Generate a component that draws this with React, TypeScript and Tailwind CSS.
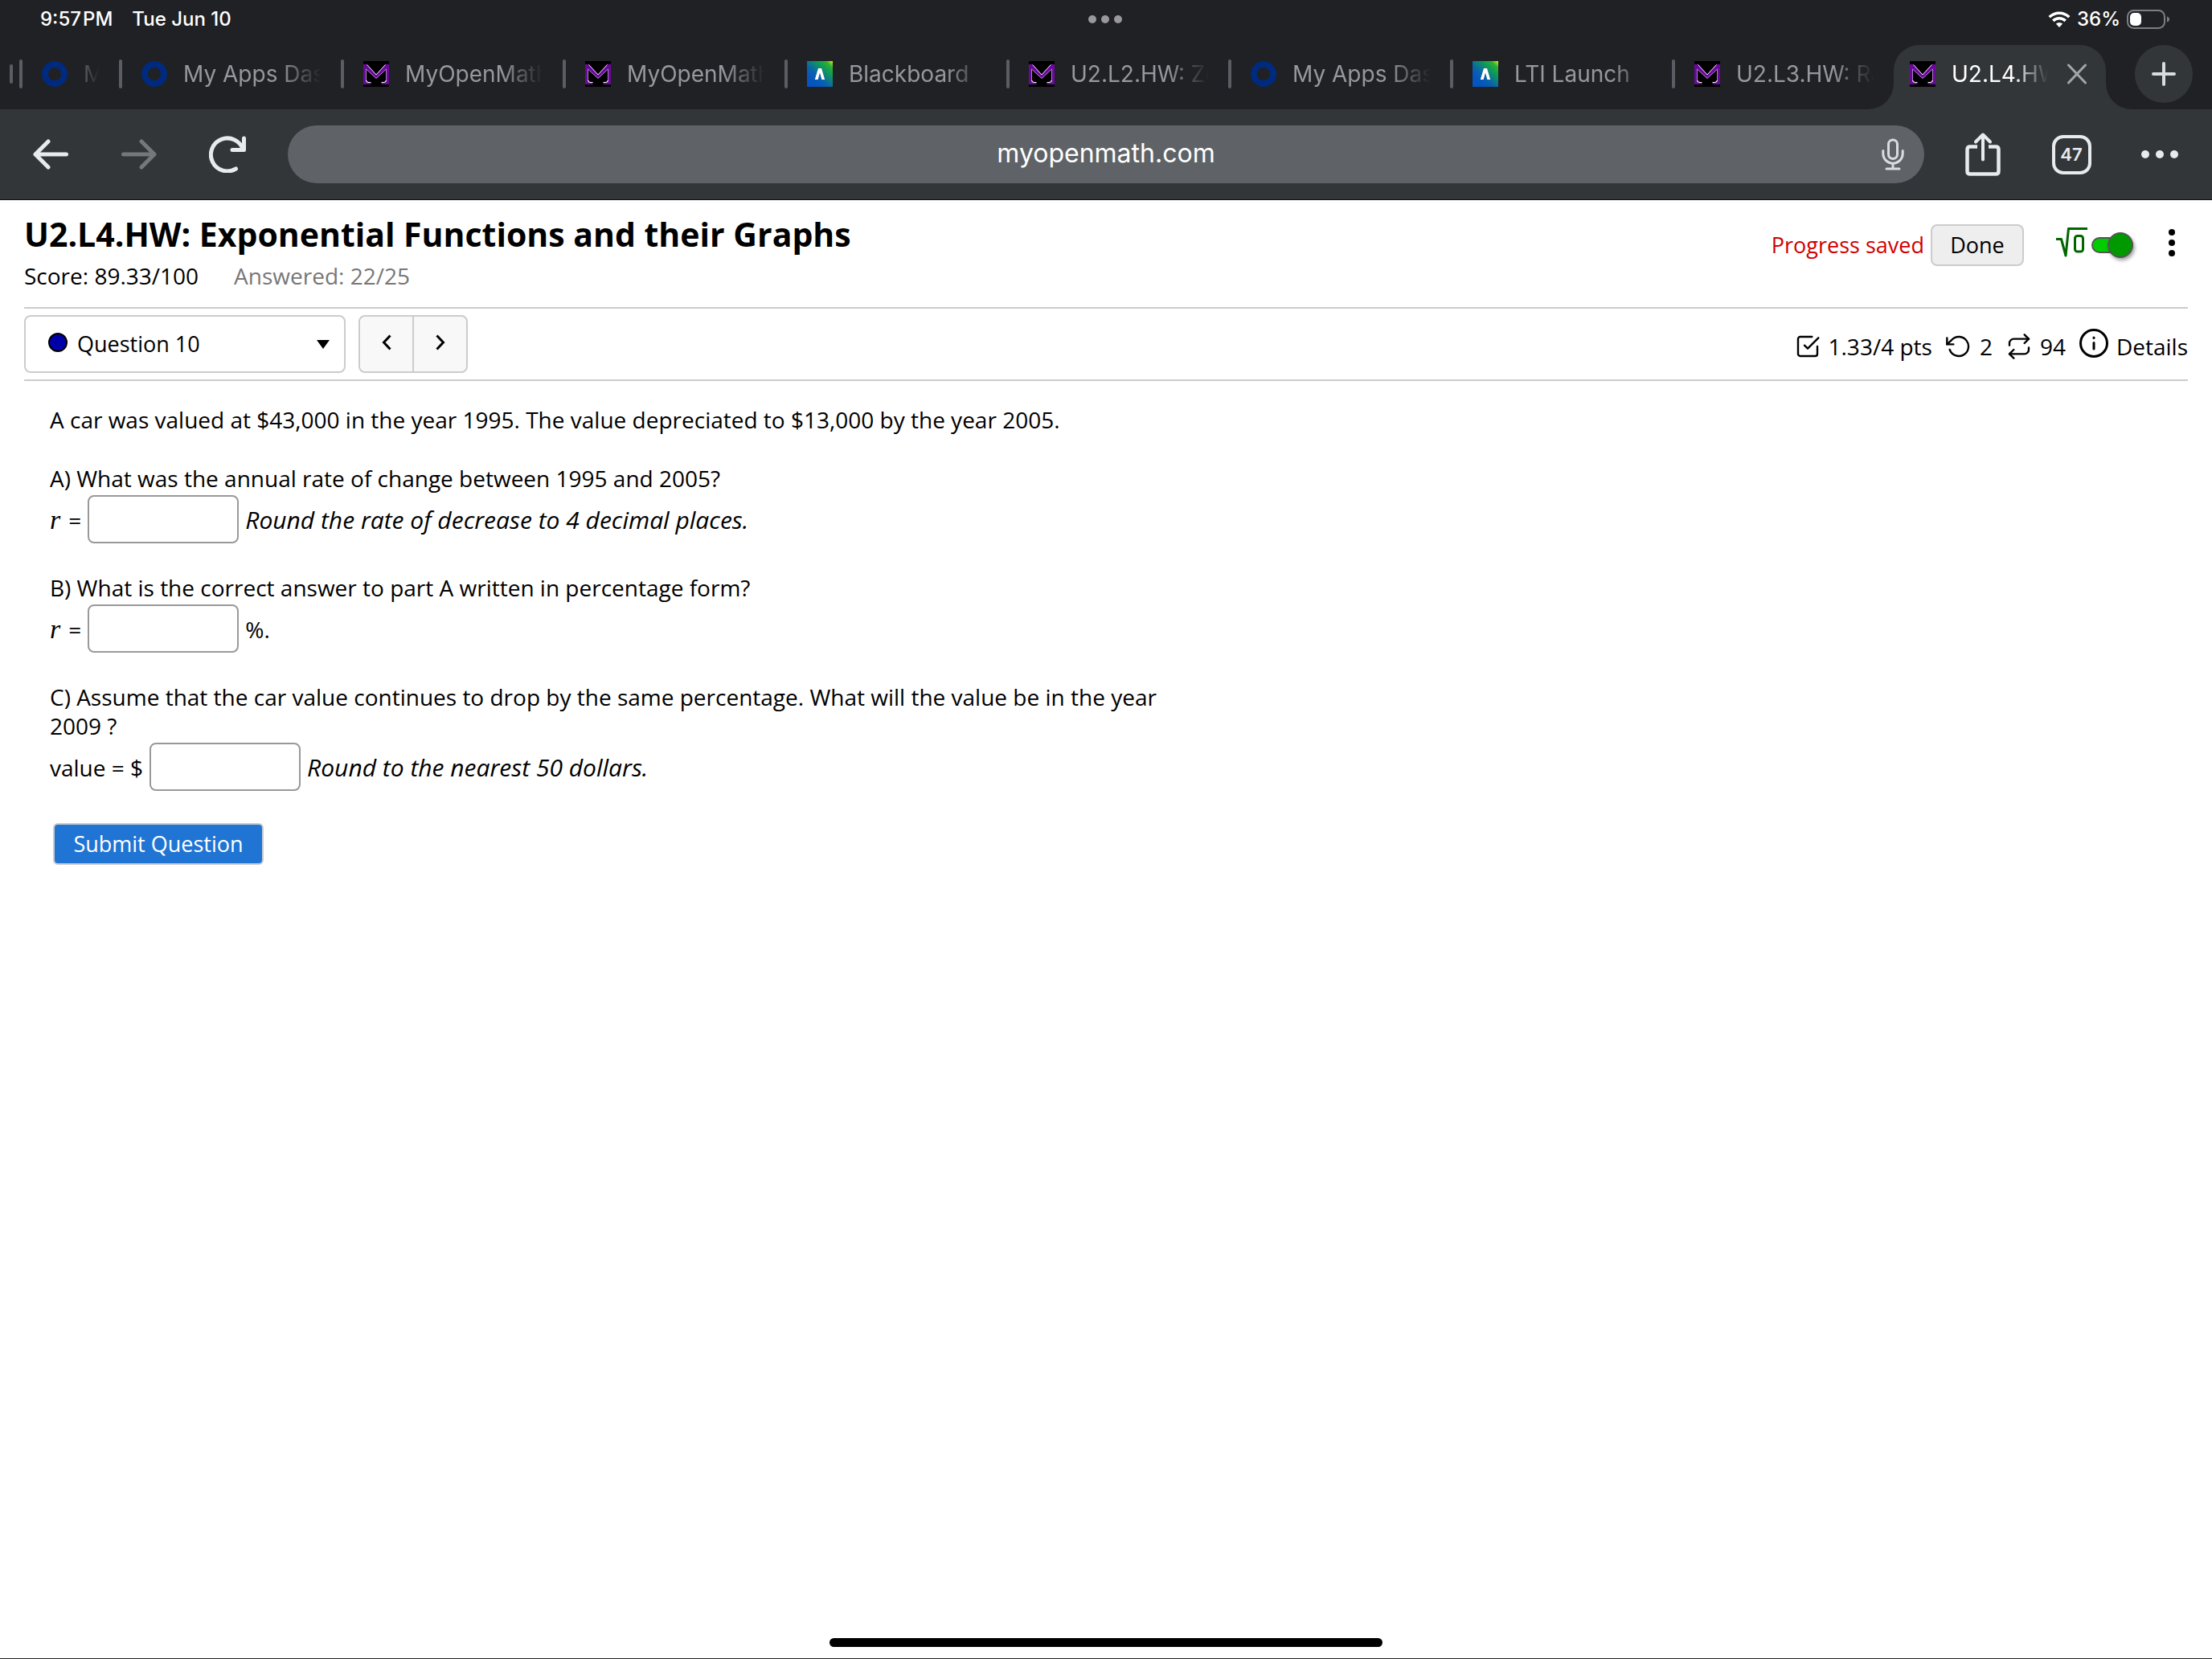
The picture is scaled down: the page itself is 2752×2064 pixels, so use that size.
import React, { useState } from "react";

function RingIcon() {
  return (
    <svg viewBox="0 0 32 32" className="size-8 shrink-0" aria-hidden="true">
      <circle cx="16" cy="16" r="12" fill="none" stroke="#002a7d" strokeWidth="8" />
    </svg>
  );
}

function MathIcon() {
  return (
    <svg viewBox="0 0 32 32" className="size-8 shrink-0" aria-hidden="true">
      <rect width="32" height="32" fill="#000" />
      <path
        d="M0 4H5L16 16.5 27 4H32V29H22.5V27H26Q28.5 27 28.5 24V10L16 22 3.5 10V24Q3.5 27 6 27H9.5V29H0Z"
        fill="#68099a"
      />
      <path d="M4.5 4.5 16 17 27.5 4.5" fill="none" stroke="#f3e8fa" strokeWidth="1" />
      <path d="M3.5 25V10L16 21.5 28.5 10V25" fill="none" stroke="#c9a3de" strokeWidth="0.8" />
      <path d="M3.7 24Q4 26.5 6.500 26.5H9.500M28.300 24Q28 26.5 25.500 26.5H22.500" fill="none" stroke="#fff" strokeWidth="1.2" />
    </svg>
  );
}

function BlackboardIcon({ id }: { id: string }) {
  return (
    <svg viewBox="0 0 32 32" className="size-8 shrink-0" aria-hidden="true">
      <defs>
        <linearGradient id={id} x1="0.25" y1="0.8" x2="1" y2="0">
          <stop offset="0" stopColor="#0455bf" />
          <stop offset="0.25" stopColor="#0a62ad" />
          <stop offset="0.65" stopColor="#12a04e" />
          <stop offset="0.82" stopColor="#2fae3a" />
          <stop offset="1" stopColor="#e0f000" />
        </linearGradient>
      </defs>
      <rect width="32" height="32" fill={`url(#${id})`} />
      <path d="M14 9H18L22.200 23H18.400L16 14.500 13.600 23H9.800Z" fill="#fff" />
    </svg>
  );
}

const tabs = [
  { title: "My Apps Dashboard", icon: <RingIcon /> },
  { title: "MyOpenMath", icon: <MathIcon /> },
  { title: "MyOpenMath", icon: <MathIcon /> },
  { title: "Blackboard", icon: <BlackboardIcon id="bb-a" /> },
  { title: "U2.L2.HW: Zeros", icon: <MathIcon /> },
  { title: "My Apps Dashboard", icon: <RingIcon /> },
  { title: "LTI Launch", icon: <BlackboardIcon id="bb-b" /> },
  { title: "U2.L3.HW: Rational", icon: <MathIcon /> },
];

function StatusBar() {
  return (
    <div className="grid h-12 grid-cols-[1fr_auto_1fr] items-center pl-[50px] pr-[52px] text-[24px] font-medium text-white">
      <div className="flex gap-6">
        <span>9:57&#8202;PM</span>
        <span>Tue Jun 10</span>
      </div>
      <div className="flex gap-1.5">
        <span className="size-2.5 rounded-full bg-[#98989d]" />
        <span className="size-2.5 rounded-full bg-[#98989d]" />
        <span className="size-2.5 rounded-full bg-[#98989d]" />
      </div>
      <div className="flex items-center justify-end gap-2">
        <svg viewBox="0 0 28 20" className="h-5 w-7" aria-label="Wi-Fi">
          <path d="M1.700 7.300A17.500 17.500 0 0 1 26.300 7.300" fill="none" stroke="#fff" strokeWidth="3.600" />
          <path d="M6.300 11.900A11 11 0 0 1 21.700 11.900" fill="none" stroke="#fff" strokeWidth="3.600" />
          <path d="M14 20 9.800 15.600A6.200 6.200 0 0 1 18.200 15.600Z" fill="#fff" />
        </svg>
        <span>36%</span>
        <svg viewBox="0 0 54 24" className="h-6 w-[54px]" aria-label="Battery">
          <rect x="1" y="1" width="46" height="22" rx="7.500" fill="none" stroke="#7d7e81" strokeWidth="2" />
          <rect x="4" y="4" width="14" height="16" rx="5" fill="#fff" />
          <path d="M50 8.500Q53 9.500 53 12T50 15.500Z" fill="#7d7e81" />
        </svg>
      </div>
    </div>
  );
}

function TabStrip() {
  return (
    <div className="flex h-[88px] items-center pl-3 pr-6 text-[28px] text-[#97979d]">
      <span className="mr-2 h-6 w-1 rounded-full bg-[#5c5c64]" />
      <button className="flex w-[124px] shrink-0 items-center text-left">
        <span className="h-9 w-1 rounded-full bg-[#5c5c64]" />
        <span className="pl-6"><RingIcon /></span>
        <span className="ml-5 w-[22px] overflow-hidden whitespace-nowrap [mask-image:linear-gradient(to_right,black_-20px,transparent_20px)]">
          My Apps
        </span>
      </button>
      {tabs.map((t, i) => (
        <button key={i} className="flex min-w-0 flex-1 items-center pr-6 text-left">
          <span className="h-9 w-1 shrink-0 rounded-full bg-[#5c5c64]" />
          <span className="pl-6">{t.icon}</span>
          <span className="ml-5 min-w-0 flex-1 overflow-hidden whitespace-nowrap [mask-image:linear-gradient(to_right,black_calc(100%-52px),transparent)]">
            {t.title}
          </span>
        </button>
      ))}
      <div className="relative mr-9 flex h-20 w-[264px] shrink-0 items-center self-end rounded-t-[32px] bg-[#333639] pb-2 pl-5 pr-6 text-white">
        <svg viewBox="0 0 32 32" className="absolute -left-8 bottom-0 size-8" aria-hidden="true">
          <path d="M32 0V32H0A32 32 0 0 0 32 0Z" fill="#333639" />
        </svg>
        <svg viewBox="0 0 32 32" className="absolute -right-8 bottom-0 size-8" aria-hidden="true">
          <path d="M0 0V32H32A32 32 0 0 1 0 0Z" fill="#333639" />
        </svg>
        <MathIcon />
        <button className="ml-5 min-w-0 flex-1 overflow-hidden whitespace-nowrap text-left [mask-image:linear-gradient(to_right,black_calc(100%-44px),transparent)]">
          U2.L4.HW: Exponential
        </button>
        <button className="ml-6" aria-label="Close tab">
          <svg viewBox="0 0 24 26" className="h-[26px] w-6" fill="none" stroke="#a4a5aa" strokeWidth="3" strokeLinecap="round">
            <path d="M1.500 2 22.500 24M22.500 2 1.500 24" />
          </svg>
        </button>
      </div>
      <button className="flex size-[72px] shrink-0 items-center justify-center rounded-full bg-[#333639]" aria-label="New tab">
        <svg viewBox="0 0 30 30" className="size-[30px]" fill="none" stroke="#d9dbdf" strokeWidth="4" strokeLinecap="round">
          <path d="M15 2V28M2 15H28" />
        </svg>
      </button>
    </div>
  );
}

const toolButton = "flex h-14 w-[110px] shrink-0 items-center justify-center";

function Toolbar() {
  return (
    <div className="flex h-[113px] items-center border-b border-[#101113] bg-[#333639] pl-2 pr-2.5 text-[#e8eaed]">
      <button className={toolButton} aria-label="Back">
        <svg viewBox="0 0 44 38" className="h-[38px] w-11" fill="none" stroke="#e8eaed" strokeWidth="5" strokeLinecap="round" strokeLinejoin="round">
          <path d="M41.500 19H3M19 3 3 19 19 35" />
        </svg>
      </button>
      <button className={toolButton} aria-label="Forward">
        <svg viewBox="0 0 44 38" className="h-[38px] w-11" fill="none" stroke="#757779" strokeWidth="5" strokeLinecap="round" strokeLinejoin="round">
          <path d="M2.500 19H41M25 3 41 19 25 35" />
        </svg>
      </button>
      <button className={toolButton} aria-label="Reload">
        <svg viewBox="0 0 46 46" className="size-[46px]" fill="none" stroke="#e8eaed" strokeWidth="5" strokeLinecap="round" strokeLinejoin="round">
          <path d="M33.500 41A20.500 20.500 0 1 1 42.500 17.500" />
          <path d="M43.500 3V17.500H29" />
        </svg>
      </button>
      <div className="ml-5 mr-[18px] flex h-[72px] flex-1 items-center rounded-full bg-[#5f6367] pl-[78px]">
        <input
          aria-label="Address"
          defaultValue="myopenmath.com"
          className="min-w-0 flex-1 bg-transparent pb-0.5 text-center text-[32px] text-white outline-none"
        />
        <button className="flex w-[78px] justify-center" aria-label="Voice search">
          <svg viewBox="0 0 28 40" className="h-10 w-7" fill="none" stroke="#dadce0" strokeWidth="3" strokeLinecap="round">
            <rect x="8.500" y="2" width="11" height="23.500" rx="5.500" />
            <path d="M1.800 15.500V19A12.200 12.200 0 0 0 26.200 19V15.500M14 31.500V38M6 38H22" />
          </svg>
        </button>
      </div>
      <button className={toolButton} aria-label="Share">
        <svg viewBox="0 0 44 56" className="h-14 w-11" fill="none" stroke="#e8eaed" strokeWidth="4.500" strokeLinecap="round" strokeLinejoin="round">
          <path d="M15 18.500H6Q2.500 18.500 2.500 22V49Q2.500 52.500 6 52.500H38Q41.500 52.500 41.500 49V22Q41.500 18.500 38 18.500H29" strokeLinecap="butt" />
          <path d="M22 34.500V4M13 12.500 22 3.500 31 12.500" strokeWidth="4" />
        </svg>
      </button>
      <button className={toolButton} aria-label="Open tabs">
        <span className="flex size-[49px] items-center justify-center rounded-[14px] border-[4px] border-[#e8eaed] text-[22px] font-semibold">
          47
        </span>
      </button>
      <button className={`${toolButton} gap-2`} aria-label="More">
        <span className="size-2.5 rounded-full bg-[#e8eaed]" />
        <span className="size-2.5 rounded-full bg-[#e8eaed]" />
        <span className="size-2.5 rounded-full bg-[#e8eaed]" />
      </button>
    </div>
  );
}

function AssessmentHeader() {
  const [editor, setEditor] = useState(true);
  return (
    <header className="flex items-start justify-between border-b-2 border-[#ccc] pb-[21px] pt-[18px]">
      <div>
        <h1 className="text-[41px] font-bold leading-[48px]">U2.L4.HW: Exponential Functions and their Graphs</h1>
        <p className="mt-2.5 flex gap-11 text-[28px] leading-[36px]">
          <span>Score: 89.33/100</span>
          <span className="text-[#777]">Answered: 22/25</span>
        </p>
      </div>
      <div className="mt-3 flex h-[52px] items-center text-[27px]">
        <span className="text-[#d00000]">Progress saved</span>
        <button className="ml-2 h-[52px] w-[116px] rounded-[8px] border-2 border-[#ccc] bg-[#eee]">Done</button>
        <label className="ml-10 flex items-center gap-1">
          <svg viewBox="0 0 40 38" className="mb-2 h-[38px] w-10" fill="none" stroke="#006600" strokeWidth="3" strokeLinejoin="round" role="img" aria-label="Equation editor">
            <path d="M0 15.500H6.500L12 36 15.500 2.500H39" />
            <rect x="23.500" y="11.500" width="10" height="19.500" rx="3" />
          </svg>
          <input
            type="checkbox"
            role="switch"
            checked={editor}
            onChange={(e) => setEditor(e.target.checked)}
            className="relative h-[20px] w-[52px] appearance-none rounded-full border-2 border-[#555] bg-[#bbb] before:absolute before:-left-0.5 before:-top-2 before:size-8 before:rounded-full before:border-2 before:border-[#555] before:bg-[#eee] before:shadow-[2px_3px_4px_rgba(0,0,0,0.35)] checked:bg-[#00cc00] checked:before:left-auto checked:before:-right-0.5 checked:before:bg-[#009900]"
          />
        </label>
        <button className="ml-7 mr-4 flex w-6 justify-end" aria-label="Options">
          <svg viewBox="0 0 8 36" className="mb-1.5 h-9 w-2" aria-hidden="true">
            <circle cx="4" cy="5" r="4" />
            <circle cx="4" cy="18" r="4" />
            <circle cx="4" cy="31" r="4" />
          </svg>
        </button>
      </div>
    </header>
  );
}

function Stroke({ children }: { children: React.ReactNode }) {
  return (
    <svg viewBox="0 0 24 24" className="size-8" fill="none" stroke="currentColor" strokeWidth="1.8" strokeLinecap="round" strokeLinejoin="round" aria-hidden="true">
      {children}
    </svg>
  );
}

function QuestionBar() {
  return (
    <nav className="flex h-[90px] items-center border-b-2 border-[#ccc]">
      <div className="relative flex h-[72px] w-[400px] items-center rounded-[8px] border-2 border-[#ccc] pl-7">
        <svg viewBox="0 0 24 24" className="mb-1 size-6" aria-hidden="true">
          <circle cx="12" cy="12" r="11" fill="#0000a8" stroke="#000" strokeWidth="2" />
        </svg>
        <select aria-label="Question" className="ml-3 h-full flex-1 appearance-none bg-transparent text-[27px] outline-none">
          <option>Question 10</option>
        </select>
        <svg viewBox="0 0 16 11" className="pointer-events-none absolute right-[18px] h-[11px] w-4" aria-hidden="true">
          <path d="M0 0H16L8 11Z" />
        </svg>
      </div>
      <div className="ml-4 flex h-[72px] w-[136px] divide-x-2 divide-[#ccc] overflow-hidden rounded-[8px] border-2 border-[#ccc] bg-[#f8f8f8]">
        <button className="flex flex-1 items-center justify-center" aria-label="Previous question">
          <svg viewBox="0 0 12 20" className="mb-1 h-5 w-3" fill="none" stroke="#000" strokeWidth="3">
            <path d="M10.500 1.500 2.500 10 10.500 18.500" />
          </svg>
        </button>
        <button className="flex flex-1 items-center justify-center" aria-label="Next question">
          <svg viewBox="0 0 12 20" className="mb-1 h-5 w-3" fill="none" stroke="#000" strokeWidth="3">
            <path d="M1.500 1.500 9.500 10 1.500 18.500" />
          </svg>
        </button>
      </div>
      <div className="ml-auto flex items-center gap-[17px] pt-1.5 text-[28px]">
        <span className="flex items-center gap-2.5">
          <Stroke>
            <path d="M9 11 12 14 22 4" />
            <path d="M21 12v7a2 2 0 0 1-2 2H5a2 2 0 0 1-2-2V5a2 2 0 0 1 2-2h11" />
          </Stroke>
          1.33/4 pts
        </span>
        <span className="flex items-center gap-2.5">
          <Stroke>
            <path d="M1 4v6h6" />
            <path d="M3.510 15a9 9 0 1 0 2.130-9.360L1 10" />
          </Stroke>
          2
        </span>
        <span className="flex items-center gap-2.5">
          <Stroke>
            <path d="m17 1 4 4-4 4" />
            <path d="M3 11V9a4 4 0 0 1 4-4h14M7 23l-4-4 4-4" />
            <path d="M21 13v2a4 4 0 0 1-4 4H3" />
          </Stroke>
          94
        </span>
        <button className="flex items-center gap-2.5">
          <svg viewBox="0 0 36 36" className="mb-2 size-9" fill="none" stroke="#000" strokeWidth="3" strokeLinecap="round" aria-hidden="true">
            <circle cx="18" cy="18" r="16.500" />
            <path d="M18 17.500V25M18 11V11.500" />
          </svg>
          Details
        </button>
      </div>
    </nav>
  );
}

const answerRow = "flex items-center gap-2 text-[28px] leading-[36px]";
const answerBox = "h-[60px] w-[188px] rounded-[8px] border-2 border-[#999] bg-white px-3 outline-none";

function Question() {
  return (
    <form className="flex max-w-[1480px] flex-col gap-[37px] px-8 pt-[30px] text-[28px] leading-[36px]" onSubmit={(e) => e.preventDefault()}>
      <p>A car was valued at $43,000 in the year 1995. The value depreciated to $13,000 by the year 2005.</p>
      <div className="flex flex-col gap-[3px]">
        <p>A) What was the annual rate of change between 1995 and 2005?</p>
        <div className={answerRow}>
          <label htmlFor="part-a" className="flex items-baseline gap-2.5 pt-0.5">
            <i className="font-['Liberation_Serif',serif] text-[34px]">r</i>=
          </label>
          <input id="part-a" className={answerBox} />
          <em className="pt-0.5 text-[30px]">Round the rate of decrease to 4 decimal places.</em>
        </div>
      </div>
      <div className="flex flex-col gap-[3px]">
        <p>B) What is the correct answer to part A written in percentage form?</p>
        <div className={answerRow}>
          <label htmlFor="part-b" className="flex items-baseline gap-2.5 pt-0.5">
            <i className="font-['Liberation_Serif',serif] text-[34px]">r</i>=
          </label>
          <input id="part-b" className={answerBox} />
          <span className="pt-0.5">%.</span>
        </div>
      </div>
      <div className="flex flex-col gap-[3px]">
        <p>C) Assume that the car value continues to drop by the same percentage. What will the value be in the year 2009 ?</p>
        <div className={answerRow}>
          <label htmlFor="part-c" className="pt-0.5">value = $</label>
          <input id="part-c" className={answerBox} />
          <em className="pt-0.5 text-[30px]">Round to the nearest 50 dollars.</em>
        </div>
      </div>
      <button className="ml-1 mt-[3px] h-[52px] w-[262px] rounded-[6px] border-2 border-[#ccc] bg-[#1f74d4] text-[27px] text-white">
        Submit Question
      </button>
    </form>
  );
}

export default function App() {
  return (
    <div className="flex min-h-screen flex-col border-b border-[#202124] bg-white">
      <div className="bg-[#202124] font-['Inter',sans-serif]">
        <StatusBar />
        <TabStrip />
        <Toolbar />
      </div>
      <main className="px-[30px] font-['Open_Sans',sans-serif] text-black">
        <AssessmentHeader />
        <QuestionBar />
        <Question />
      </main>
      <div className="mx-auto mb-3.5 mt-auto h-[11px] w-1/4 rounded-full bg-black" />
    </div>
  );
}
